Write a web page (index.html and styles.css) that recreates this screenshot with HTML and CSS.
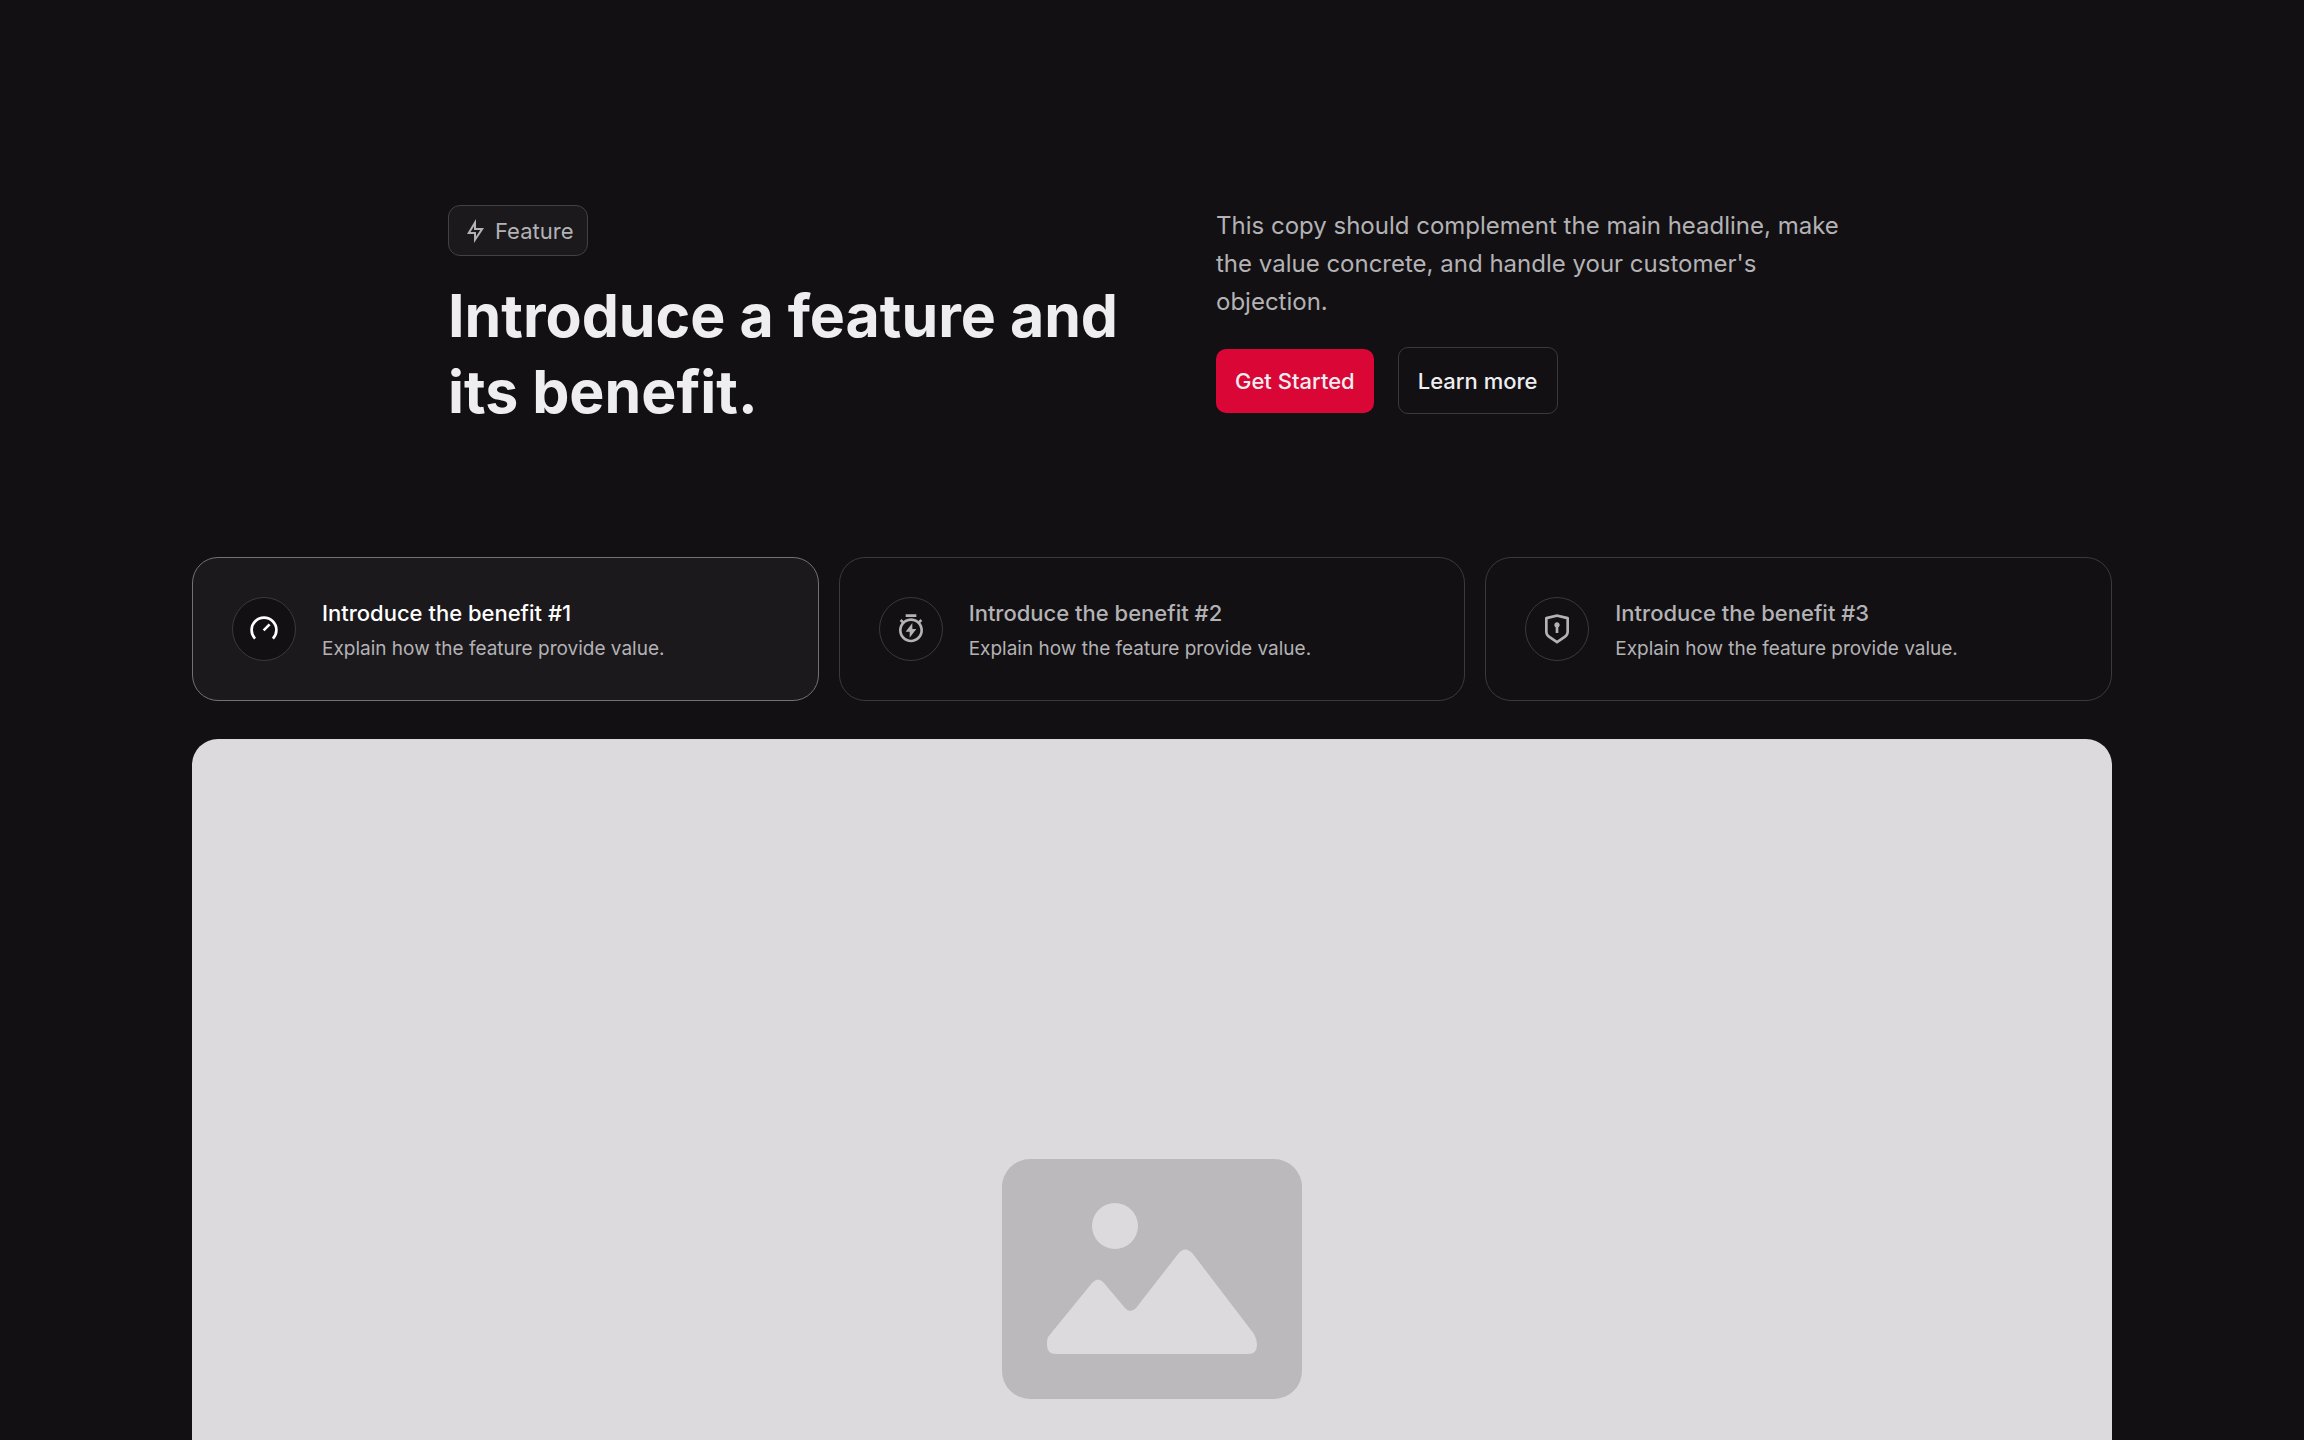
FILE: index.html
```html
<!DOCTYPE html>
<html lang="en">
<head>
<meta charset="utf-8">
<meta name="viewport" content="width=device-width, initial-scale=1">
<title>Feature</title>
<link rel="stylesheet" href="styles.css">
</head>
<body>
<main class="feature">
  <header class="intro">
    <div class="intro-title">
      <span class="badge">
        <svg class="badge-icon" viewBox="0 0 24 24" aria-hidden="true"><path d="M13 9H21L11 24V15H4L13 0V9ZM11 11V7.22063L7.53238 13H13V17.3944L17.263 11H11Z"/></svg>
        Feature
      </span>
      <h1 class="headline">Introduce a feature and its benefit.</h1>
    </div>
    <div class="intro-copy">
      <p class="lead">This copy should complement the main headline, make the value concrete, and handle your customer's objection.</p>
      <div class="actions">
        <button class="button button-primary" type="button">Get Started</button>
        <button class="button button-outline" type="button">Learn more</button>
      </div>
    </div>
  </header>

  <div class="tabs" role="tablist" aria-label="Benefits">
    <button class="tab tab-active" type="button" role="tab" aria-selected="true">
      <span class="tab-icon"><svg viewBox="0 0 24 24" aria-hidden="true"><path class="stroke" d="M5.3 19.2A9.3 9.3 0 1 1 18.7 19.2M11.7 13L16.2 8.5"/></svg></span>
      <span class="tab-text">
        <span class="tab-title">Introduce the benefit #1</span>
        <span class="tab-note">Explain how the feature provide value.</span>
      </span>
    </button>
    <button class="tab" type="button" role="tab" aria-selected="false">
      <span class="tab-icon"><svg viewBox="0 0 24 24" aria-hidden="true"><path d="M6.38231 5.9681C7.92199 4.73647 9.87499 4 12 4C14.125 4 16.078 4.73647 17.6177 5.9681L19.0711 4.51472L20.4853 5.92893L19.0319 7.38231C20.2635 8.92199 21 10.875 21 13C21 17.9706 16.9706 22 12 22C7.02944 22 3 17.9706 3 13C3 10.875 3.73647 8.92199 4.96807 7.38231L3.51472 5.92893L4.92893 4.51472L6.38231 5.9681ZM12 20C15.866 20 19 16.866 19 13C19 9.13401 15.866 6 12 6C8.13401 6 5 9.13401 5 13C5 16.866 8.13401 20 12 20ZM13 12H16L11 18.5V14H8L13 7.495V12ZM8 1H16V3H8V1Z"/></svg></span>
      <span class="tab-text">
        <span class="tab-title">Introduce the benefit #2</span>
        <span class="tab-note">Explain how the feature provide value.</span>
      </span>
    </button>
    <button class="tab" type="button" role="tab" aria-selected="false">
      <span class="tab-icon"><svg viewBox="0 0 24 24" aria-hidden="true"><path d="M12 1L20.2169 2.82598C20.6745 2.92766 21 3.33347 21 3.80217V13.7889C21 15.795 19.9974 17.6684 18.3282 18.7812L12 23L5.6718 18.7812C4.00261 17.6684 3 15.795 3 13.7889V3.80217C3 3.33347 3.32553 2.92766 3.78307 2.82598L12 1ZM12 3.04879L5 4.60434V13.7889C5 15.1263 5.6684 16.3752 6.7812 17.1171L12 20.5963L17.2188 17.1171C18.3316 16.3752 19 15.1263 19 13.7889V4.60434L12 3.04879ZM12 7C13.1046 7 14 7.89543 14 9C14 9.73984 13.5983 10.3858 13.0011 10.7318L13 15H11L10.9999 10.7324C10.4022 10.3866 10 9.74025 10 9C10 7.89543 10.8954 7 12 7Z"/></svg></span>
      <span class="tab-text">
        <span class="tab-title">Introduce the benefit #3</span>
        <span class="tab-note">Explain how the feature provide value.</span>
      </span>
    </button>
  </div>

  <div class="media" role="tabpanel" aria-label="Image placeholder">
    <svg class="placeholder" viewBox="0 0 300 240" aria-hidden="true">
      <rect class="placeholder-frame" width="300" height="240" rx="28"/>
      <circle class="placeholder-shape" cx="113" cy="67" r="23"/>
      <path class="placeholder-shape" d="M46 178L90 124Q96 117 102 124L123 149Q128 155 134 149L176 95Q183 86 191 95L249 171Q255 178 255 186Q255 195 246 195H54Q45 195 45 186Q45 180 46 178Z"/>
    </svg>
  </div>
</main>
</body>
</html>
```
FILE: styles.css
```css
:root {
  --page: #121013;
  --panel: #1b191c;
  --line: #3b393d;
  --line-strong: #737175;
  --text: #eeeef0;
  --muted: #b3b2b5;
  --accent: #d90636;
}

* {
  box-sizing: border-box;
}

body {
  margin: 0;
  background: var(--page);
  color: var(--text);
  font-family: Inter, "Liberation Sans", sans-serif;
}

button {
  font: inherit;
  color: inherit;
  cursor: pointer;
}

svg {
  fill: currentColor;
}

.feature {
  max-width: 1920px;
  margin: 0 auto;
  padding: 205px 0 128px;
}

.intro {
  display: grid;
  grid-template-columns: 1fr 1fr;
  max-width: 1408px;
  margin: 0 auto 127px;
}

.badge {
  display: inline-flex;
  align-items: center;
  gap: 8px;
  height: 51px;
  padding: 0 14px;
  border: 1px solid #434145;
  border-radius: 12px;
  background: var(--panel);
  color: var(--muted);
  font-size: 22px;
}

.badge-icon {
  width: 24px;
  height: 24px;
}

.headline {
  margin: 22px 0 0;
  font-size: 59px;
  font-weight: 700;
  line-height: 76px;
}

.intro-copy {
  padding-left: 64px;
}

.lead {
  margin: 0;
  padding-top: 2px;
  color: var(--muted);
  font-size: 24px;
  line-height: 38px;
}

.actions {
  display: flex;
  align-items: center;
  gap: 24px;
  margin-top: 26px;
}

.button {
  height: 64px;
  padding: 0 19px;
  border: 0;
  border-radius: 10px;
  background: none;
  font-size: 22px;
  font-weight: 500;
}

.button-primary {
  background: var(--accent);
}

.button-outline {
  height: 67px;
  border: 1px solid var(--line);
}

.tabs {
  display: grid;
  grid-template-columns: repeat(3, 1fr);
  gap: 20px;
}

.tab {
  display: flex;
  align-items: center;
  gap: 26px;
  height: 144px;
  padding: 0 39px;
  border: 1px solid var(--line);
  border-radius: 26px;
  background: none;
  color: var(--muted);
  text-align: left;
}

.tab-active {
  border-color: var(--line-strong);
  background: var(--panel);
}

.tab-icon {
  display: grid;
  place-items: center;
  flex: none;
  width: 64px;
  height: 64px;
  border: 1px solid var(--line);
  border-radius: 50%;
  background: var(--page);
}

.tab-icon svg {
  width: 32px;
  height: 32px;
}

.tab-active .tab-icon,
.tab-active .tab-title {
  color: #fff;
}

.stroke {
  fill: none;
  stroke: currentColor;
  stroke-width: 2;
}

.tab-text {
  display: grid;
  gap: 4px;
  padding-top: 2px;
}

.tab-title {
  font-size: 22px;
  font-weight: 500;
  line-height: 34px;
}

.tab-note {
  font-size: 19px;
  line-height: 30px;
}

.media {
  display: grid;
  place-items: center;
  aspect-ratio: 16 / 9;
  margin-top: 38px;
  border-radius: 26px;
  background: #dcdadd;
}

.placeholder {
  width: 300px;
}

.placeholder-frame {
  fill: #bbb9bc;
}

.placeholder-shape {
  fill: #dcdadd;
}
```
